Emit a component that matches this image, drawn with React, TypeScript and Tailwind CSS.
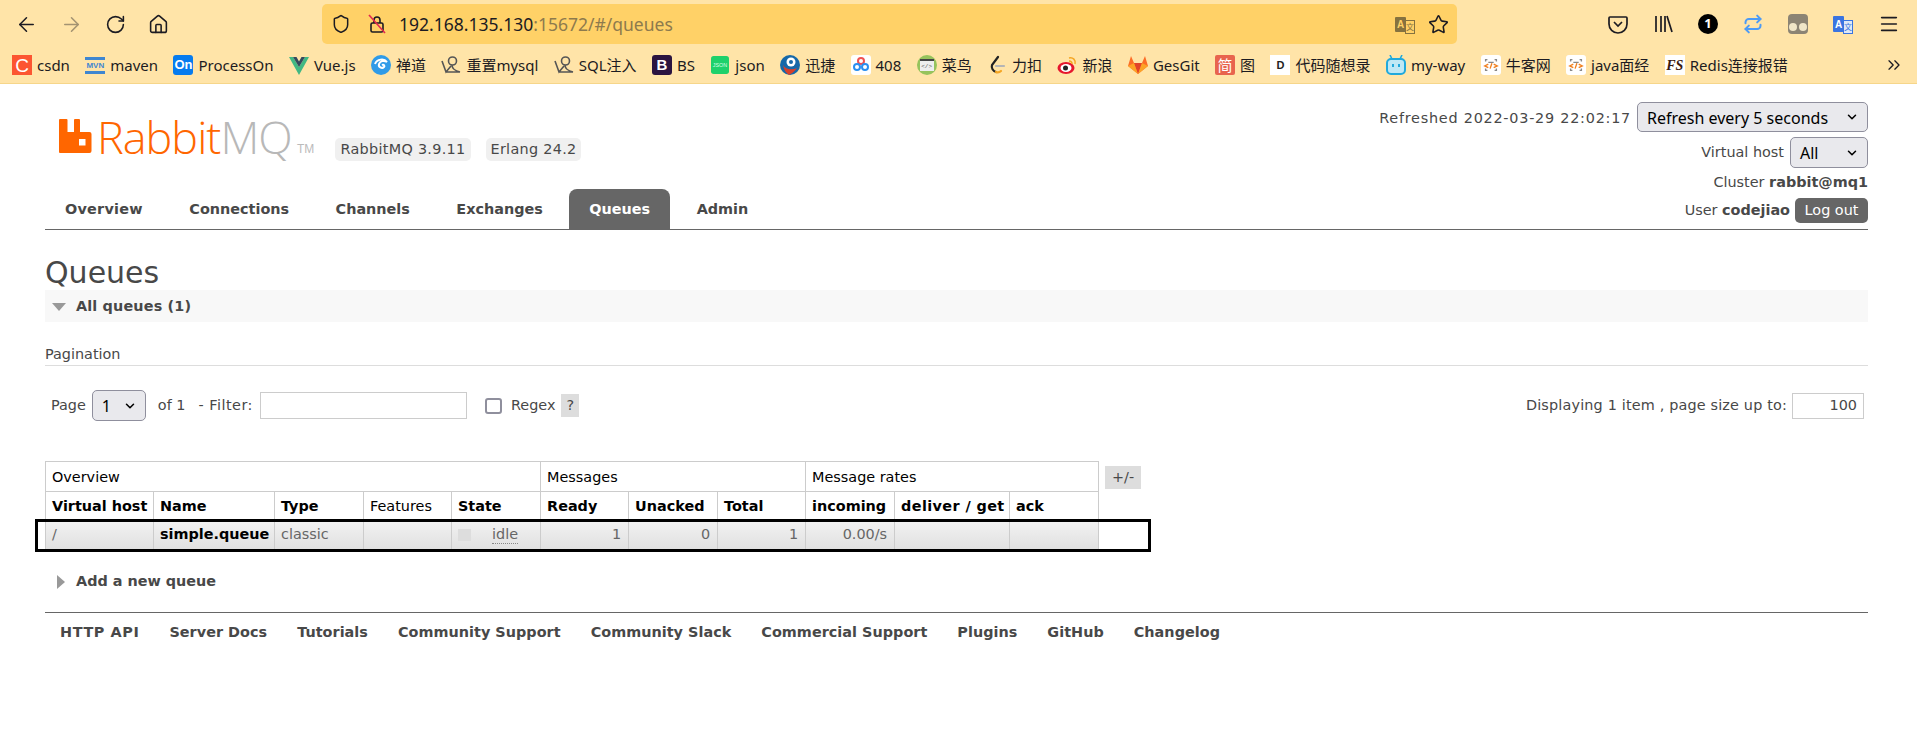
import React from "react";
import { ArrowLeft, ArrowRight, RotateCw, House, Shield, Star, Menu, Repeat, ChevronDown, ChevronsRight } from "lucide-react";

const pageFont = "font-['DejaVu_Sans',Verdana,sans-serif]";
const uiFont = "font-['Noto_Sans','Noto_Sans_CJK_SC',sans-serif]";

const Tile = ({ className, children }: { className: string; children?: React.ReactNode }) => (
  <span className={`flex h-5 w-5 shrink-0 items-center justify-center overflow-hidden ${className}`}>{children}</span>
);

const AuthIcon = () => (
  <svg viewBox="0 0 20 20" className="h-5 w-5 shrink-0" fill="none" stroke="#555" strokeWidth="1.6">
    <circle cx="11.5" cy="6" r="4" />
    <path d="M1 6 L5 17 L10 11 M11 10 C11 13 14 16 19 17 L5 17" />
  </svg>
);

const NowcoderIcon = () => (
  <Tile className="rounded-[3px] bg-white">
    <svg viewBox="0 0 20 20" className="h-[18px] w-[18px]" fill="none" strokeWidth="1.5">
      <path d="M6 4H4v2M14 4h2v2M4 14v2h2M16 14v2h-2" stroke="#888" />
      <path d="M7 7h6" stroke="#888" />
      <path d="M7 9 L3 11 L7 13" stroke="#f08020" />
      <path d="M13 9 L17 11 L13 13 M11 8 L9 14" stroke="#f08020" />
    </svg>
  </Tile>
);

const bookmarks: { label: string; icon: React.ReactNode }[] = [
  { label: "csdn", icon: <Tile className="bg-[#fc5531] text-[19px] leading-none text-white font-['Liberation_Sans']">C</Tile> },
  {
    label: "maven",
    icon: (
      <span className="flex h-5 w-5 shrink-0 flex-col items-center justify-center gap-px">
        <span className="h-[3px] w-full bg-[#3f86d0]" />
        <span className="text-[8px] font-bold leading-[9px] text-[#3f86d0] font-['Liberation_Sans']">MVN</span>
        <span className="h-[3px] w-full bg-[#3f86d0]" />
      </span>
    ),
  },
  { label: "ProcessOn", icon: <Tile className="rounded-[3px] bg-[#067bef] text-[13px] font-bold text-white font-['Liberation_Sans']">On</Tile> },
  {
    label: "Vue.js",
    icon: (
      <svg viewBox="0 0 20 20" className="h-5 w-5 shrink-0">
        <path d="M0 2h4l6 10L16 2h4L10 20z" fill="#41b883" />
        <path d="M4 2h3.5L10 6.5 12.5 2H16l-6 10z" fill="#35495e" />
      </svg>
    ),
  },
  {
    label: "禅道",
    icon: (
      <svg viewBox="0 0 20 20" className="h-5 w-5 shrink-0">
        <circle cx="10" cy="10" r="10" fill="#2f9be8" />
        <path d="M4 9c2-5 9-6 12-2-3-2-7-1-8 2-1 3 3 5 5 3 1-1 0-3-2-2" fill="none" stroke="#fff" strokeWidth="2" />
      </svg>
    ),
  },
  { label: "重置mysql", icon: <AuthIcon /> },
  { label: "SQL注入", icon: <AuthIcon /> },
  { label: "BS", icon: <Tile className="rounded-[3px] bg-[#2b1440] text-[15px] font-bold text-white font-['Liberation_Sans']">B</Tile> },
  { label: "json", icon: <Tile className="scale-90 rounded-[3px] bg-[#1fd16b] text-[6px] text-[#d8ffe6] font-['Liberation_Sans']">JSON</Tile> },
  {
    label: "迅捷",
    icon: (
      <svg viewBox="0 0 20 20" className="h-5 w-5 shrink-0">
        <circle cx="10" cy="10" r="10" fill="#1668a8" />
        <circle cx="11" cy="7" r="4.5" fill="#fff" />
        <circle cx="11" cy="7" r="2" fill="#1668a8" />
        <path d="M3 10c3 5 9 5 14 3-3 4-6 6-8 7-3-2-5-5-6-10z" fill="#d8402a" />
      </svg>
    ),
  },
  {
    label: "408",
    icon: (
      <Tile className="rounded-[3px] bg-white">
        <svg viewBox="0 0 20 20" className="h-5 w-5" fill="none" strokeWidth="2">
          <circle cx="10" cy="6" r="3" stroke="#f05050" />
          <circle cx="6" cy="12" r="3" stroke="#2a8ff0" />
          <circle cx="14" cy="12" r="3" stroke="#2a8ff0" />
        </svg>
      </Tile>
    ),
  },
  {
    label: "菜鸟",
    icon: (
      <Tile className="rounded-full bg-[#96c35c]">
        <span className="flex h-3 w-3.5 items-center justify-center border-t-2 border-[#444] bg-[#eee] text-[6px] text-[#555] font-['Liberation_Mono']">&lt;/&gt;</span>
      </Tile>
    ),
  },
  {
    label: "力扣",
    icon: (
      <svg viewBox="0 0 20 20" className="h-5 w-5 shrink-0" fill="none" strokeWidth="2.2" strokeLinecap="round">
        <path d="M11 2 L5 10 C4 13 6 16 9 17" stroke="#222" />
        <path d="M9 17 C11 18 13 17 14 16" stroke="#f5a623" />
        <path d="M9 11 H17" stroke="#b5b5b5" />
      </svg>
    ),
  },
  {
    label: "新浪",
    icon: (
      <svg viewBox="0 0 20 20" className="h-5 w-5 shrink-0">
        <ellipse cx="9" cy="13" rx="8.5" ry="6" fill="#e6162d" />
        <ellipse cx="9" cy="13" rx="5.5" ry="4" fill="#fff" />
        <circle cx="8.5" cy="13" r="2.5" fill="#222" />
        <path d="M12 3c4-1 7 2 6 6M12 6c2 0 3 1 3 3" stroke="#f5a623" strokeWidth="1.5" fill="none" />
      </svg>
    ),
  },
  {
    label: "GesGit",
    icon: (
      <svg viewBox="0 0 20 20" className="h-5 w-5 shrink-0">
        <path d="M10 19 L0 11 L3 1 L6 8 H14 L17 1 L20 11 Z" fill="#fc6d26" />
        <path d="M10 19 L6 8 H14 Z" fill="#e24329" />
        <path d="M10 19 L0 11 L6 8 Z M10 19 L20 11 L14 8 Z" fill="#fca326" />
      </svg>
    ),
  },
  { label: "图", icon: <Tile className="rounded-[2px] bg-[#e8644e] text-[15px] text-white">简</Tile> },
  { label: "代码随想录", icon: <Tile className="bg-white text-[11px] font-bold text-[#222] font-['Liberation_Sans']">D</Tile> },
  {
    label: "my-way",
    icon: (
      <svg viewBox="0 0 20 20" className="h-5 w-5 shrink-0" fill="none">
        <path d="M6 4 L4 0 M14 4 L16 0" stroke="#21a9dc" strokeWidth="1.6" />
        <rect x="1" y="4" width="18" height="15" rx="4" stroke="#21a9dc" strokeWidth="2" fill="#bfe8f5" />
        <path d="M7 9v3M13 9v3" stroke="#21a9dc" strokeWidth="2" />
      </svg>
    ),
  },
  { label: "牛客网", icon: <NowcoderIcon /> },
  { label: "java面经", icon: <NowcoderIcon /> },
  { label: "Redis连接报错", icon: <Tile className="bg-white text-[14px] font-bold italic text-[#3a1a10] font-['Liberation_Serif']">FS</Tile> },
];

const BrowserChrome = () => (
  <div className={`h-[84px] border-b border-[#f6d68a] bg-[#ffe4a8] text-[#1c1b22] ${uiFont}`}>
    <div className="flex h-[47px] items-center pt-[1px]">
      <div className="flex w-[322px] items-center gap-[22px] pl-[15px]">
        <ArrowLeft size={23} strokeWidth={1.6} />
        <ArrowRight size={23} strokeWidth={1.6} className="opacity-40" />
        <RotateCw size={21} strokeWidth={1.8} />
        <House size={21} strokeWidth={1.8} />
      </div>
      <div className="flex h-10 w-[1135px] items-center rounded-[5px] bg-[#ffd167] pl-[9px] pr-[8px]">
        <Shield size={20} strokeWidth={1.8} />
        <svg viewBox="0 0 20 20" className="ml-[16px] h-5 w-5" fill="none" stroke="#1c1b22" strokeWidth="1.6">
          <rect x="4" y="9" width="12" height="9" rx="1.5" />
          <path d="M7 9V6a3 3 0 0 1 6 0v3" />
          <path d="M2 1 L18 19" stroke="#e22850" />
        </svg>
        <span className="ml-[12px] text-[17.5px]">
          192.168.135.130<span className="text-[#8d7a4d]">:15672/#/queues</span>
        </span>
        <span className="ml-auto mr-[13px] flex h-5 w-5 items-center justify-center">
          <span className="flex h-[15px] w-[12px] items-center justify-center rounded-[1px] bg-[#85723f] text-[10px] font-bold text-[#ffd167] font-['Liberation_Sans']">A</span>
          <span className="ml-[-1px] mt-[5px] flex h-[14px] w-[10px] items-center justify-center border border-[#85723f] text-[8px] text-[#85723f]">文</span>
        </span>
        <Star size={21} strokeWidth={1.8} />
      </div>
      <div className="ml-[151px] flex items-center gap-[25px]">
        <svg viewBox="0 0 20 20" className="h-5 w-5" fill="none" stroke="#1c1b22" strokeWidth="1.7">
          <path d="M2 3h16a1 1 0 0 1 1 1v6a9 9 0 0 1-18 0V4a1 1 0 0 1 1-1z" />
          <path d="M6 8l4 4 4-4" />
        </svg>
        <svg viewBox="0 0 20 20" className="h-5 w-5" fill="none" stroke="#1c1b22" strokeWidth="1.7">
          <path d="M3 2v16M8 2v16M12 2v16M14 2l5 16" />
        </svg>
        <span className="flex h-5 w-5 items-center justify-center rounded-full bg-black text-[13px] font-bold text-white">1</span>
        <Repeat size={20} strokeWidth={2.4} className="text-[#4d9bf5]" />
        <span className="flex h-5 w-5 items-end justify-center gap-[2px] rounded-[4px] bg-[#8c8474] pb-[3px]">
          <span className="h-2 w-2 rounded-full bg-[#f0e6c8]" />
          <span className="h-2 w-2 rounded-full bg-[#f0e6c8]" />
        </span>
        <span className="flex h-5 w-5 items-center justify-center">
          <span className="flex h-[16px] w-[12px] items-center justify-center rounded-[1px] bg-[#3a74e0] text-[10px] font-bold text-white font-['Liberation_Sans']">A</span>
          <span className="ml-[-1px] mt-[5px] flex h-[14px] w-[10px] items-center justify-center border border-[#3a74e0] bg-[#dfe8f5] text-[8px] text-[#3a74e0]">文</span>
        </span>
        <Menu size={22} strokeWidth={1.8} />
      </div>
    </div>
    <div className="relative flex h-[36px] items-center gap-[15.4px] pl-[12px] text-[15px]">
      {bookmarks.map((b) => (
        <div key={b.label} className="flex items-center gap-[5px] whitespace-nowrap">
          {b.icon}
          <span>{b.label}</span>
        </div>
      ))}
      <ChevronsRight size={20} strokeWidth={1.6} className="absolute left-[1884px] top-[8px]" />
    </div>
  </div>
);

const Select = ({ value, className }: { value: string; className: string }) => (
  <span className={`relative flex items-center rounded-[5px] border border-[#8f8f9d] bg-[#e9e9ed] pl-[9px] pt-[1px] text-[16px] text-black ${uiFont} ${className}`}>
    {value}
    <ChevronDown size={14} strokeWidth={2.6} className="absolute right-[8px] top-1/2 -translate-y-1/2" />
  </span>
);

const tabs = ["Overview", "Connections", "Channels", "Exchanges", "Queues", "Admin"];

const Header = () => (
  <div className="flex h-[146px] justify-between border-b border-[#666]">
    <div className="flex flex-col justify-between">
      <div className="flex items-start pl-[14px] pt-[35px]">
        <svg viewBox="0 0 33 34" className="h-[34px] w-[33px] shrink-0">
          <path
            fillRule="evenodd"
            d="M1 0h6.5a1 1 0 0 1 1 1v12h6.5V1a1 1 0 0 1 1-1h4a1 1 0 0 1 1 1v12h9.5a2 2 0 0 1 2 2v17a2 2 0 0 1-2 2H1a1 1 0 0 1-1-1V1a1 1 0 0 1 1-1z M20 20v6.5h6.5v-6.5z"
            fill="#f60"
          />
        </svg>
        <span className="ml-[5px] mt-[-11px] w-[200px] text-[45px] font-light leading-[58px] tracking-[-1px] font-['Open_Sans',sans-serif]">
          <span className="text-[#f60]">Rabbit</span>
          <span className="text-[#b8b8b8]">MQ</span>
        </span>
        <span className="mt-[21px] w-[18px] text-[12px] text-[#bbb] font-['Liberation_Sans']">TM</span>
        <span className="ml-[20px] mt-[19px] flex h-[23px] w-[136px] items-center justify-center rounded-[5px] bg-[#f0f0f0] text-[14.4px] tracking-[0.3px]">RabbitMQ 3.9.11</span>
        <span className="ml-[15px] mt-[19px] flex h-[23px] w-[95px] items-center justify-center rounded-[5px] bg-[#f0f0f0] text-[14.4px] tracking-[0.3px]">Erlang 24.2</span>
      </div>
      <div className="flex items-end">
        {tabs.map((t) => (
          <span
            key={t}
            className={`mr-[6.5px] flex h-10 items-center rounded-t-[8px] px-5 pt-[2px] text-[14.4px] font-bold ${t === "Queues" ? "bg-[#666] text-white" : ""} ${t === "Overview" ? "tracking-[0.25px]" : ""}`}
          >
            {t}
          </span>
        ))}
      </div>
    </div>
    <div className="flex flex-col items-end pt-[18px] text-[14.4px]">
      <div className="flex h-[30px] items-center gap-[6px]">
        <span className="pt-[3px] tracking-[0.76px]">Refreshed 2022-03-29 22:02:17</span>
        <Select value="Refresh every 5 seconds" className="h-[30px] w-[231px]" />
      </div>
      <div className="mt-[5px] flex h-[31px] items-center gap-[6px]">
        Virtual host
        <Select value="All" className="h-[31px] w-[78px]" />
      </div>
      <div className="flex h-[30px] items-center">
        <span>
          Cluster <b>rabbit@mq1</b>
        </span>
      </div>
      <div className="flex items-center gap-[5px]">
        <span>
          User <b>codejiao</b>
        </span>
        <span className="flex h-[25px] w-[73px] items-center justify-center rounded-[5px] bg-[#666] text-white">Log out</span>
      </div>
    </div>
  </div>
);

const thCell = "border border-[#ccc] px-[6px] text-left align-middle whitespace-nowrap overflow-hidden";
const headCell = `${thCell} pt-[2px]`;
const numCell = "border border-[#ccc] px-[7px] text-right";

const QueueTable = () => (
  <div className="relative mt-[40px] flex items-start">
    <table className="w-[1054px] table-fixed border-collapse text-[14.4px] text-black">
      <colgroup>
        <col className="w-[108px]" />
        <col className="w-[121px]" />
        <col className="w-[89px]" />
        <col className="w-[88px]" />
        <col className="w-[89px]" />
        <col className="w-[88px]" />
        <col className="w-[89px]" />
        <col className="w-[88px]" />
        <col className="w-[89px]" />
        <col className="w-[115px]" />
        <col className="w-[89px]" />
      </colgroup>
      <thead>
        <tr className="h-[30px]">
          <th colSpan={5} className={`${headCell} font-normal`}>Overview</th>
          <th colSpan={3} className={`${headCell} font-normal`}>Messages</th>
          <th colSpan={3} className={`${headCell} font-normal`}>Message rates</th>
        </tr>
        <tr className="h-[29px]">
          <th className={headCell}>Virtual host</th>
          <th className={headCell}>Name</th>
          <th className={headCell}>Type</th>
          <th className={`${headCell} font-normal`}>Features</th>
          <th className={headCell}>State</th>
          <th className={headCell}>Ready</th>
          <th className={headCell}>Unacked</th>
          <th className={headCell}>Total</th>
          <th className={headCell}>incoming</th>
          <th className={`${headCell} tracking-[0.4px]`}>deliver / get</th>
          <th className={headCell}>ack</th>
        </tr>
      </thead>
      <tbody>
        <tr className="h-[29px] bg-gradient-to-b from-[#f2f2f2] to-[#e0e0e0] text-[#666]">
          <td className={thCell}>/</td>
          <td className={`${thCell} font-bold text-black`}>simple.queue</td>
          <td className={thCell}>classic</td>
          <td className={thCell}></td>
          <td className={thCell}>
            <div className="flex items-center">
              <span className="h-3 w-[13px] bg-[#ddd]" />
              <span className="ml-[21px] border-b border-dotted border-[#888] leading-[17px]">idle</span>
            </div>
          </td>
          <td className={numCell}>1</td>
          <td className={numCell}>0</td>
          <td className={numCell}>1</td>
          <td className={numCell}>0.00/s</td>
          <td className={numCell}></td>
          <td className={numCell}></td>
        </tr>
      </tbody>
    </table>
    <span className="ml-[6px] mt-[5px] flex h-[23px] w-9 items-center justify-center bg-[#ddd] text-[14.4px]">+/-</span>
    <div className="absolute left-[-10px] top-[58px] h-[33px] w-[1116px] border-[3px] border-black" />
  </div>
);

const footerLinks = ["HTTP API", "Server Docs", "Tutorials", "Community Support", "Community Slack", "Commercial Support", "Plugins", "GitHub", "Changelog"];

export default function App() {
  return (
    <div className="h-[753px] overflow-hidden bg-white">
      <BrowserChrome />
      <div className={`pl-[45px] pr-[49px] text-[14.4px] text-[#484848] ${pageFont}`}>
        <Header />
        <h1 className="mt-[24px] pt-[1px] text-[30px] leading-[35px]">Queues</h1>
        <div className="flex h-8 items-center bg-[#f8f8f8] pl-[7px] pt-[1px] font-bold">
          <span className="h-0 w-0 border-x-[7px] border-t-[8px] border-x-transparent border-t-[#999]" />
          <span className="ml-[10px] tracking-[0.15px]">All queues (1)</span>
        </div>
        <div className="mt-[25px] flex h-[19px] items-center border-b border-[#ddd] pb-[3px]">Pagination</div>
        <div className="mt-[24px] flex h-[31px] items-center">
          <span className="ml-[6px]">Page</span>
          <Select value="1" className="ml-[6px] h-[31px] w-[54px]" />
          <span className="ml-[12px]">of 1</span>
          <span className="ml-[13px] tracking-[0.5px]">- Filter:</span>
          <span className="ml-[7px] h-[27px] w-[207px] border border-[#ccc]" />
          <span className="ml-[18px] h-4 w-[17px] rounded-[3px] border-2 border-[#8f8f9d]" />
          <span className="ml-[9px]">Regex</span>
          <span className="ml-[6px] flex h-[23px] w-[18px] items-center justify-center bg-[#ddd]">?</span>
          <span className="ml-auto tracking-[0.17px]">Displaying 1 item , page size up to:</span>
          <span className="ml-[5px] mr-[4px] flex h-[26px] w-[72px] items-center justify-end border border-[#ccc] pr-[6px]">100</span>
        </div>
        <QueueTable />
        <div className="mt-[21px] flex items-center pl-[12px] font-bold">
          <span className="h-0 w-0 border-y-[7px] border-l-[8px] border-y-transparent border-l-[#999]" />
          <span className="ml-[11px]">Add a new queue</span>
        </div>
        <div className="mt-[19px] flex gap-[30px] border-t border-[#666] pl-[15px] pt-[9px] font-bold tracking-[0.03px]">
          {footerLinks.map((l) => (
            <span key={l} className={l === "HTTP API" ? "tracking-[0.6px]" : ""}>
              {l}
            </span>
          ))}
        </div>
      </div>
    </div>
  );
}
